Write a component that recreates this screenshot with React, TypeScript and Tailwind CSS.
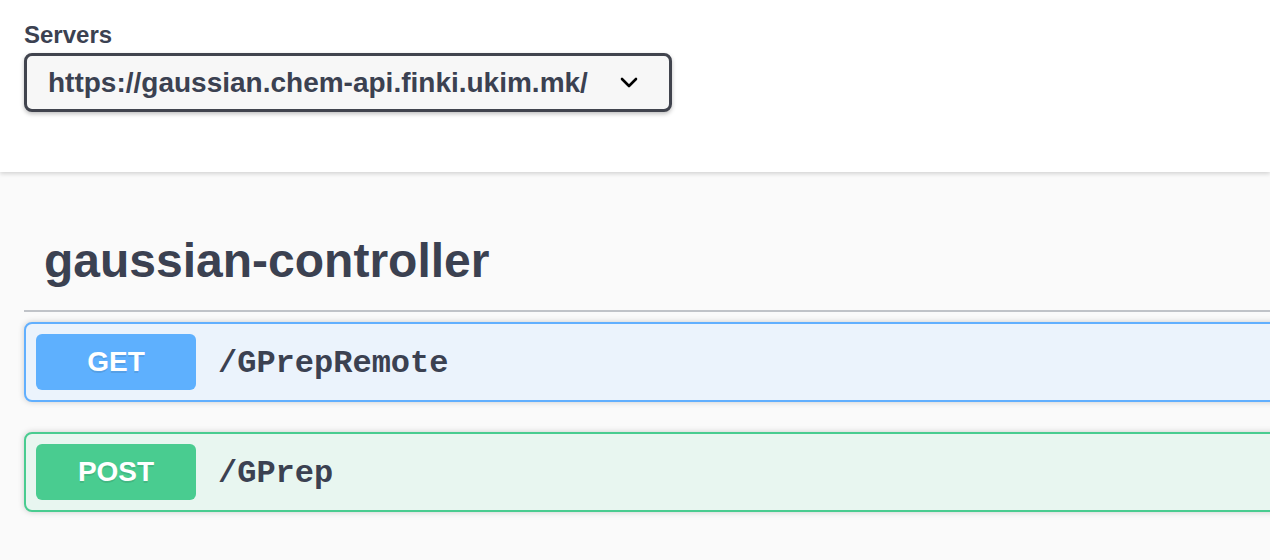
export default function App() {
    const ops = [
        { method: 'GET', path: '/GPrepRemote', border: 'border-[#61affe]', bg: 'bg-[#ebf3fc]', badge: 'bg-[#5eb0fe]' },
        { method: 'POST', path: '/GPrep', border: 'border-[#49cc90]', bg: 'bg-[#e8f6f0]', badge: 'bg-[#49cc90]' },
    ]

    return (
        <div className="w-[1270px] h-[560px] overflow-hidden bg-[#fafafa] text-[#3b4151] font-['Liberation_Sans',Arial,sans-serif]">
            {/* servers */}
            <div className="relative z-10 h-[172px] bg-white px-6 pt-[21px] shadow-[0_2px_4px_0_rgba(0,0,0,0.15)]">
                <div className="text-[24px] font-bold leading-[28px]">Servers</div>
                <div className="mt-[4px] inline-flex h-[59px] w-[648px] items-center justify-between rounded-lg border-[3px] border-[#41444e] bg-[#f7f7f7] pl-[21px] pr-[31px] shadow-[0_2px_4px_0_rgba(0,0,0,0.25)]">
                    <span className="text-[28px] font-bold leading-[32px]">https://gaussian.chem-api.finki.ukim.mk/</span>
                    <svg width="18" height="11" viewBox="0 0 18 11" fill="none" stroke="#000" strokeWidth="2.6" strokeLinecap="round" strokeLinejoin="round">
                        <path d="M2 2l7 7 7-7" />
                    </svg>
                </div>
            </div>

            {/* tag section */}
            <div className="w-[1400px] pl-6 pt-10">
                <h3 className="border-b-2 border-[#c0c3c8] px-5 py-5 text-[48px] font-bold leading-[58px]">gaussian-controller</h3>
                <div className="mt-[10px] flex flex-col gap-[30px]">
                    {ops.map((op) => (
                        <div key={op.method} className={`flex items-center rounded-lg border-2 p-[10px] shadow-[0_0_6px_rgba(0,0,0,0.19)] ${op.border} ${op.bg}`}>
                            <span className={`w-[160px] rounded-md py-3 text-center text-[28px] font-bold leading-[32px] text-white [text-shadow:0_2px_0_rgba(0,0,0,0.1)] ${op.badge}`}>
                                {op.method}
                            </span>
                            <span className="px-[22px] pt-[3px] font-['Liberation_Mono','Courier_New',monospace] text-[32px] font-bold leading-[32px]">{op.path}</span>
                        </div>
                    ))}
                </div>
            </div>
        </div>
    )
}
